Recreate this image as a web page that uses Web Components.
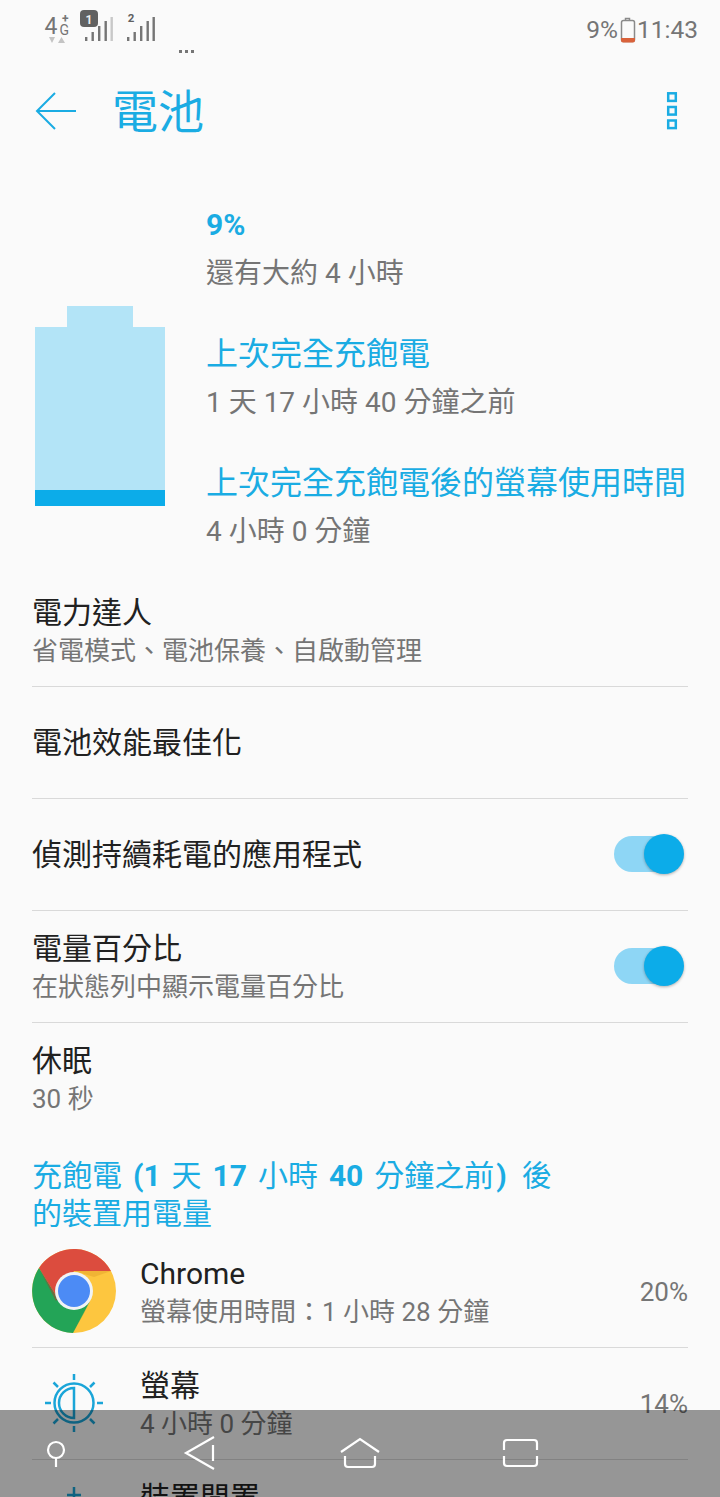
<!DOCTYPE html>
<html lang="zh-Hant"><head><meta charset="utf-8"><title>電池</title>
<style>
html,body{margin:0;padding:0;height:1497px;overflow:hidden;background:#fafafa;font-family:Roboto,"Noto Sans CJK TC",sans-serif}
</style></head><body>
<battery-page></battery-page>
<script>
const BLUE='#1aace3';
function def(name,css,html){
  customElements.define(name,class extends HTMLElement{
    constructor(){super();const s=this.attachShadow({mode:'open'});
      s.innerHTML='<style>'+css+'</style>'+html;}
  });
}
def('status-bar',`:host{display:flex;height:72px;box-sizing:border-box;padding:8px 22px 0 44px;justify-content:space-between;color:#757575;font:24.500px/1 Roboto,sans-serif}
.l{display:flex;align-items:flex-start}.r{display:flex;align-items:center;height:44px}
.dots{margin:41px 0 0 8px;width:18px;height:4px}`,
`<div class="l"><svg width="126" height="40" viewBox="0 0 126 40" style="display:block">
<text x="0.500" y="26" font-family="Roboto" font-size="23" fill="#757575">4</text>
<text x="15.500" y="27" font-family="Roboto" font-size="14" fill="#757575">G</text>
<text x="18" y="15" font-family="Roboto" font-weight="700" font-size="12" fill="#757575">+</text>
<path d="M5 29h6l-3 6zM14 35h7l-3.500-6z" fill="#c4c4c4"/>
<rect x="36" y="2" width="18" height="17" rx="4" fill="#616161"/>
<text x="45" y="15.500" font-family="Roboto" font-weight="700" font-size="12" fill="#eee" text-anchor="middle">1</text>
<g fill="#757575"><rect x="41" y="29" width="2.400" height="4"/><rect x="47.500" y="24" width="2.400" height="9"/><rect x="54" y="18" width="2.400" height="15"/><rect x="60.500" y="13" width="2.400" height="20"/></g><rect x="66.500" y="9" width="2.400" height="24" fill="#c8c8c8"/>
<text x="87" y="14" font-family="Roboto" font-weight="700" font-size="11.500" fill="#616161" text-anchor="middle">2</text>
<g fill="#757575"><rect x="83" y="29" width="2.400" height="4"/><rect x="89.500" y="24" width="2.400" height="9"/><rect x="96" y="18" width="2.400" height="15"/><rect x="102.500" y="13" width="2.400" height="20"/><rect x="108.500" y="9" width="2.400" height="24"/></g>
</svg><svg class="dots" viewBox="0 0 18 4"><g fill="#757575"><rect x="1" y="1" width="3" height="3"/><rect x="7" y="1" width="3" height="3"/><rect x="13" y="1" width="3" height="3"/></g></svg></div>
<div class="r"><span>9%</span><svg width="16" height="26" viewBox="0 0 16 26" style="margin:0 1px 0 2px"><path d="M5.500 3V1.500h4V3" fill="none" stroke="#8a8a8a" stroke-width="1.500"/><rect x="1.500" y="3.500" width="13" height="21" rx="2" fill="none" stroke="#8a8a8a" stroke-width="1.500"/><path d="M1 21h14v2.500a2 2 0 0 1-2 2H3a2 2 0 0 1-2-2z" fill="#d9623b"/></svg><span>11:43</span></div>`);

def('app-bar',`:host{display:flex;align-items:center;height:78px;color:${BLUE}}
svg{display:block;flex:none}.b{margin-left:35px}
h1{margin:2px 0 0 35px;flex:1;font:400 46px/78px Roboto,"Noto Sans CJK TC",sans-serif}.m{margin-right:40px}`,
`<svg class="b" width="42" height="42" viewBox="0 0 42 42" fill="none" stroke="${BLUE}" stroke-width="2"><path d="M41 21H2M20 3 2 21l18 18"/></svg><h1>電池</h1>
<svg class="m" width="16" height="38" viewBox="0 0 16 38" fill="none" stroke="${BLUE}" stroke-width="2.500"><rect x="4.200" y="1.300" width="7.600" height="7.600"/><rect x="4.200" y="15" width="7.600" height="7.600"/><rect x="4.200" y="28.500" width="7.600" height="7.600"/></svg>`);

def('battery-gauge',`:host{display:block;flex:none;width:132px}svg{display:block}`,
`<svg width="132" height="200" viewBox="0 0 132 200"><path d="M33 0h66v21h32v179H1V21h32z" fill="#b3e4f7"/><rect x="1" y="184" width="130" height="16" fill="#0cace9"/></svg>`);

def('stat-line',`:host{display:block;height:129px;box-sizing:border-box}
.t{color:${BLUE};font:400 32px/46px Roboto,"Noto Sans CJK TC",sans-serif;white-space:nowrap;height:46px}
.v{color:#757575;font:400 28px/38px Roboto,"Noto Sans CJK TC",sans-serif;margin-top:7px;white-space:nowrap}
:host([big]) .t{font-weight:700;font-size:30px}`,
`<div class="t"><slot name="t"></slot></div><div class="v"><slot name="v"></slot></div>`);

def('battery-summary',`:host{display:flex;height:425px;padding:52px 0 0 34px;box-sizing:border-box;align-items:flex-start}
battery-gauge{margin-top:104px}.c{margin-left:40px}`,
`<battery-gauge></battery-gauge><div class="c"><slot></slot></div>`);

def('setting-row',`:host{display:flex;align-items:center;height:112px;margin:0 32px;box-sizing:border-box;border-bottom:1px solid #d9d9d9;justify-content:space-between}
:host([last]){border-bottom:none}
.t{color:#212121;font:400 30px/40px Roboto,"Noto Sans CJK TC",sans-serif}
.s{color:#757575;font:400 26px/36px Roboto,"Noto Sans CJK TC",sans-serif}`,
`<div><div class="t"><slot name="t"></slot></div><div class="s"><slot name="s"></slot></div></div><slot name="a"></slot>`);

def('on-switch',`:host{display:block;width:70px;height:40px;position:relative;margin:0 4px 2px 0}
.track{position:absolute;left:0;top:2px;width:64px;height:36px;border-radius:18px;background:#8ed6f5}
.knob{position:absolute;right:0;top:0;width:40px;height:40px;border-radius:50%;background:#0cace9;box-shadow:0 1px 3px rgba(0,0,0,.3)}`,
`<div class="track"></div><div class="knob"></div>`);

def('section-head',`:host{display:block;margin:0 32px;height:101px;box-sizing:border-box;padding-top:22px;color:${BLUE};font:400 30px/38px Roboto,"Noto Sans CJK TC",sans-serif;word-spacing:3.500px;white-space:nowrap}`,`<slot></slot>`);

def('usage-row',`:host{display:flex;align-items:center;height:112px;margin:0 32px;box-sizing:border-box;border-bottom:1px solid #d9d9d9}
.i{width:84px;height:84px;flex:none;margin:0 24px 1px 0;display:flex;align-items:center;justify-content:center}
.m{flex:1;margin-top:2px}.t{color:#212121;font:400 30px/38px Roboto,"Noto Sans CJK TC",sans-serif}
.s{color:#757575;font:400 26px/36px Roboto,"Noto Sans CJK TC",sans-serif;margin-top:1px}
.p{color:#757575;font:400 26px/1 Roboto,sans-serif}`,
`<div class="i"><slot name="i"></slot></div><div class="m"><div class="t"><slot name="t"></slot></div><div class="s"><slot name="s"></slot></div></div><div class="p"><slot name="p"></slot></div>`);

def('nav-bar',`:host{display:block;position:absolute;left:0;right:0;top:1410px;height:87px;background:rgba(0,0,0,.4)}
svg{display:block;position:absolute;left:0;top:0}`,
`<svg width="720" height="87" viewBox="0 0 720 87" fill="none" stroke="#fff" stroke-width="2.200">
<circle cx="56" cy="40" r="8"/><path d="M56 48v9"/>
<path d="M214 27 186 43l28 16M213 35v16"/>
<path d="M341 42 360 29l19 13M345 46v8a3 3 0 0 0 3 3h24a3 3 0 0 0 3-3v-8"/>
<path d="M504 40V33a3 3 0 0 1 3-3h27a3 3 0 0 1 3 3v7M504 46v7a3 3 0 0 0 3 3h27a3 3 0 0 0 3-3v-7"/></svg>`);

def('battery-page',`:host{display:block;position:relative;height:1497px;overflow:hidden;background:#fafafa;font-family:Roboto,"Noto Sans CJK TC",sans-serif}`,
`<status-bar></status-bar><app-bar></app-bar>
<battery-summary>
<stat-line big><span slot="t">9%</span><span slot="v">還有大約 4 小時</span></stat-line>
<stat-line><span slot="t">上次完全充飽電</span><span slot="v">1 天 17 小時 40 分鐘之前</span></stat-line>
<stat-line><span slot="t">上次完全充飽電後的螢幕使用時間</span><span slot="v">4 小時 0 分鐘</span></stat-line>
</battery-summary>
<setting-row><span slot="t">電力達人</span><span slot="s">省電模式、電池保養、自啟動管理</span></setting-row>
<setting-row><span slot="t">電池效能最佳化</span></setting-row>
<setting-row><span slot="t">偵測持續耗電的應用程式</span><on-switch slot="a"></on-switch></setting-row>
<setting-row><span slot="t">電量百分比</span><span slot="s">在狀態列中顯示電量百分比</span><on-switch slot="a"></on-switch></setting-row>
<setting-row last><span slot="t">休眠</span><span slot="s">30 秒</span></setting-row>
<section-head><div>充飽電 <b>(1</b> 天 <b>17</b> 小時 <b>40</b> 分鐘之前<b style="padding-left:2px">)</b><span style="word-spacing:7.500px"> </span>後</div><div>的裝置用電量</div></section-head>
<usage-row>
<svg slot="i" width="84" height="84" viewBox="0 0 84 84"><circle cx="42" cy="42" r="42" fill="#fdc63f"/><path d="M7 19A42 42 0 0 1 79 22H42L26 50z" fill="#dc4c3e"/><path d="M7 19 26 50 42 42 58 52 41 84A42 42 0 0 1 7 19z" fill="#23a457"/><path d="M7 19 26 50 24 52z" fill="#b5342a" opacity=".5"/><path d="M42 22H79L62 28z" fill="#e8a92e" opacity=".6"/><path d="M58 52 41 84 52 64z" fill="#188043" opacity=".5"/><circle cx="42" cy="42" r="19" fill="#f1f3f4"/><circle cx="42" cy="42" r="16" fill="#4c8bf5"/></svg>
<span slot="t">Chrome</span><span slot="s">螢幕使用時間：1 小時 28 分鐘</span><span slot="p">20%</span></usage-row>
<usage-row>
<svg slot="i" width="60" height="60" viewBox="0 0 60 60" fill="none" stroke="#1aa5d8" stroke-width="2.500"><circle cx="30" cy="30" r="19.500"/><path d="M30 15a15 15 0 0 0 0 30z"/><path d="M30 1v6M30 53v6M1 30h6M53 30h6M9.500 9.500l4.500 4.500M46 46l4.500 4.500M50.500 9.500 46 14M14 46l-4.500 4.500"/></svg>
<span slot="t">螢幕</span><span slot="s">4 小時 0 分鐘</span><span slot="p">14%</span></usage-row>
<usage-row>
<svg slot="i" width="60" height="60" viewBox="0 0 60 60" fill="none" stroke="#1aa5d8" stroke-width="2.500"><path d="M30 2v30M23 10h14"/></svg>
<span slot="t">裝置閒置</span><span slot="s">&nbsp;</span></usage-row>
<nav-bar></nav-bar>`);
</script>
</body></html>
